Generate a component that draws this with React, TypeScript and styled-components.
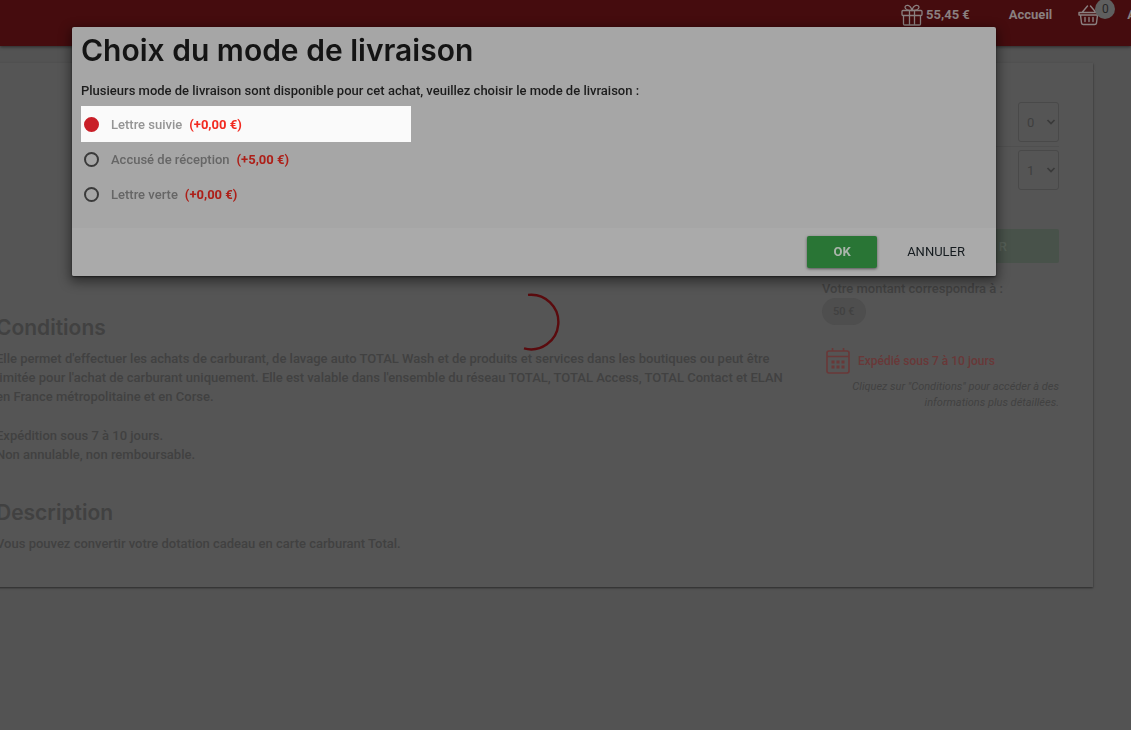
import React, { useState } from "react";
import styled, { createGlobalStyle } from "styled-components";

const GlobalStyle = createGlobalStyle`
  * { box-sizing: border-box; }
  html, body { margin: 0; background: #535353; }
  body { font-family: Roboto, "Liberation Sans", sans-serif; font-size: 13px; font-weight: 500; color: #414141; overflow: hidden; }
  h1, h2, p, fieldset { margin: 0; padding: 0; border: 0; }
  button, select { font-family: inherit; }
`;

const Page = styled.div`
  min-height: 100vh;
  overflow: hidden;
  background: #535353;
`;

const Header = styled.header`
  height: 46px;
  background: #450c0e;
  box-shadow: 0 1px 3px rgba(0, 0, 0, 0.5);
`;

const Nav = styled.nav`
  display: flex;
  align-items: center;
  justify-content: flex-end;
  height: 30px;
  margin-right: -5px;
`;

const NavLink = styled.a<{ $gap?: number }>`
  display: flex;
  align-items: center;
  gap: 3px;
  position: relative;
  margin-left: ${(p) => p.$gap ?? 0}px;
  color: #8a8080;
  font-size: 13px;
  font-weight: 700;
  line-height: 16px;
  text-decoration: none;
`;

const Badge = styled.span`
  position: absolute;
  left: 17px;
  top: -5px;
  width: 20px;
  height: 20px;
  border-radius: 50%;
  background: #5f5f5f;
  color: #262626;
  font-size: 12px;
  font-weight: 400;
  line-height: 20px;
  text-align: center;
`;

const Card = styled.main`
  display: grid;
  grid-template-columns: minmax(0, 1fr) 237px;
  column-gap: 24px;
  margin: 17px 38px 0 -40px;
  padding: 39px 34px 34px 36px;
  background: #555555;
  box-shadow: 0 1px 2px rgba(0, 0, 0, 0.5);
`;

const Article = styled.div`
  padding-top: 213px;
`;

const Section = styled.section`
  & + & {
    margin-top: 36px;
  }
`;

const SectionTitle = styled.h2`
  font-family: Inter, sans-serif;
  font-size: 21px;
  font-weight: 600;
  line-height: 26px;
  margin-bottom: 8px;
`;

const Paragraph = styled.p`
  line-height: 19px;
  & + & {
    margin-top: 20px;
  }
`;

const Aside = styled.aside`
  display: flex;
  flex-direction: column;
`;

const QuantityRow = styled.div`
  display: flex;
  justify-content: flex-end;
  height: 48px;

  &:first-child {
    background: linear-gradient(#4f4f4f, #4f4f4f) 0 44px / 100% 1px no-repeat;
  }
`;

const SelectBox = styled.span`
  position: relative;
  display: block;
  width: 41px;
  height: 40px;

  svg {
    position: absolute;
    right: 3px;
    top: 16px;
    pointer-events: none;
  }
`;

const Select = styled.select`
  appearance: none;
  width: 100%;
  height: 100%;
  padding: 0 8px;
  border: 1px solid #494949;
  border-radius: 3px;
  background: transparent;
  color: #3f3f3f;
  font-size: 13px;
`;

const OrderButton = styled.button`
  height: 34px;
  margin-top: 31px;
  padding: 0 52px 0 0;
  border: 0;
  border-radius: 2px;
  background: #48524a;
  color: #566058;
  font-size: 13px;
  font-weight: 500;
  text-align: right;
`;

const Amount = styled.div`
  margin-top: 18px;
  line-height: 16px;
`;

const Chip = styled.div`
  align-self: flex-start;
  margin-top: 1px;
  padding: 0 11px;
  border-radius: 14px;
  background: #4e4e4e;
  font-size: 11px;
  line-height: 27px;
`;

const Shipping = styled.div`
  display: flex;
  align-items: center;
  gap: 8px;
  margin: 22px 0 0 4px;
  color: #693838;
  font-size: 12px;
`;

const Note = styled.p`
  margin-top: 5px;
  font-size: 11px;
  font-style: italic;
  font-weight: 400;
  line-height: 16px;
  text-align: right;
`;

const Spinner = styled.svg`
  position: fixed;
  left: 502px;
  top: 293px;
`;

const Overlay = styled.div`
  position: fixed;
  inset: 0;
  padding: 27px 135px 0 72px;
`;

const Dialog = styled.form`
  border-radius: 2px;
  background: #a6a6a6;
  box-shadow: 0 4px 12px 2px rgba(0, 0, 0, 0.45), 0 1px 2px rgba(0, 0, 0, 0.5);
`;

const DialogBody = styled.div`
  padding: 4px 9px 16px;
  color: #141414;
`;

const DialogTitle = styled.h1`
  font-family: Inter, sans-serif;
  font-size: 30px;
  font-weight: 600;
  line-height: 38px;
`;

const Lead = styled.p`
  margin: 14px 0 7px;
  color: #1c1c1c;
  line-height: 16px;
`;

const Option = styled.label<{ $active: boolean }>`
  display: flex;
  align-items: center;
  width: 330px;
  max-width: 100%;
  height: ${(p) => (p.$active ? 36 : 35)}px;
  padding-left: 3px;
  background: ${(p) => (p.$active ? "#fafafa" : "transparent")};
  color: ${(p) => (p.$active ? "#959595" : "#666666")};
  cursor: pointer;
`;

const Radio = styled.input`
  appearance: none;
  width: 15px;
  height: 15px;
  margin: 0 12px 0 0;
  border: 2px solid #3a3a3a;
  border-radius: 50%;

  &:checked {
    border-color: #c91f28;
    background: #c91f28;
  }
`;

const Price = styled.strong<{ $active: boolean }>`
  margin-left: 7px;
  color: ${(p) => (p.$active ? "#f22a20" : "#ad1f18")};
  font-weight: 700;
`;

const DialogFooter = styled.footer`
  display: flex;
  justify-content: flex-end;
  align-items: center;
  gap: 14px;
  height: 48px;
  padding: 0 15px;
  border-radius: 0 0 2px 2px;
  background: #aaaaaa;
`;

const Button = styled.button<{ $primary?: boolean }>`
  height: 32px;
  min-width: 70px;
  padding: 0 16px 1px;
  border: 0;
  border-radius: 2px;
  background: ${(p) => (p.$primary ? "#297535" : "transparent")};
  box-shadow: ${(p) => (p.$primary ? "0 1px 3px rgba(0, 0, 0, 0.5)" : "none")};
  color: ${(p) => (p.$primary ? "#aab5ab" : "#151b1f")};
  font-size: 13px;
  font-weight: ${(p) => (p.$primary ? 700 : 400)};
`;

const GiftIcon = () => (
  <svg width="22" height="22" viewBox="0 0 22 22" fill="none" stroke="currentColor" strokeWidth="1.3" strokeLinejoin="round" aria-hidden="true">
    <rect x="1" y="6.5" width="20" height="5" rx="1" />
    <path d="M2.5 11.5V20q0 1 1 1h15q1 0 1-1v-8.500M8.500 6.500V21M13.500 6.500V21" />
    <path d="M11 6.500C8 6.500 4 5.500 4 3.300 4 .5 9.500.2 11 6.500ZM11 6.500C14 6.500 18 5.500 18 3.300 18 .5 12.500.2 11 6.500Z" />
  </svg>
);

const BasketIcon = () => (
  <svg width="22" height="22" viewBox="0 0 22 22" fill="none" stroke="currentColor" strokeWidth="1.4" strokeLinecap="round" strokeLinejoin="round" aria-hidden="true">
    <path d="M1 8.500h20v2.500H1zM2.500 11l1 8q.3 1.500 1.800 1.500h11.400q1.500 0 1.800-1.500l1-8M4 8.500L9.500 2M18 8.500L12.500 2" />
    <path d="M7 13.500v4M11 13.500v4M15 13.500v4" />
  </svg>
);

const CalendarIcon = () => (
  <svg width="24" height="27" viewBox="0 0 24 27" fill="none" stroke="currentColor" strokeWidth="1.6" aria-hidden="true">
    <rect x="1" y="4" width="22" height="22" rx="2" />
    <path d="M1 9.500h22M6.500 1v3M17.500 1v3" />
    <path d="M5.500 15h3M10.500 15h3M15.500 15h3M5.500 20h3M10.500 20h3M15.500 20h3" strokeWidth="3" />
  </svg>
);

const Quantity = ({ label, value }: { label: string; value: string }) => (
  <QuantityRow>
    <SelectBox>
      <Select aria-label={label} defaultValue={value}>
        <option>{value}</option>
      </Select>
      <svg width="10" height="8" viewBox="0 0 10 8" fill="none" stroke="#3a3a3a" strokeWidth="1.7" aria-hidden="true">
        <path d="M1.500 2L5 5.500 8.500 2" />
      </svg>
    </SelectBox>
  </QuantityRow>
);

const options = [
  { name: "Lettre suivie", price: "(+0,00 €)" },
  { name: "Accusé de réception", price: "(+5,00 €)" },
  { name: "Lettre verte", price: "(+0,00 €)" },
];

export default function App() {
  const [selected, setSelected] = useState(0);

  return (
    <>
      <GlobalStyle />
      <Page>
        <Header>
          <Nav>
            <NavLink href="#"><GiftIcon />55,45 €</NavLink>
            <NavLink href="#" $gap={39}>Accueil</NavLink>
            <NavLink href="#" $gap={26}><BasketIcon /><Badge>0</Badge></NavLink>
            <NavLink href="#" $gap={27}>A</NavLink>
          </Nav>
        </Header>
        <Card>
          <Article>
            <Section>
              <SectionTitle>Conditions</SectionTitle>
              <Paragraph>
                Elle permet d'effectuer les achats de carburant, de lavage auto TOTAL Wash et de produits et services dans les boutiques ou peut être
                <br />
                limitée pour l'achat de carburant uniquement. Elle est valable dans l'ensemble du réseau TOTAL, TOTAL Access, TOTAL Contact et ELAN
                <br />
                en France métropolitaine et en Corse.
              </Paragraph>
              <Paragraph>
                Expédition sous 7 à 10 jours.
                <br />
                Non annulable, non remboursable.
              </Paragraph>
            </Section>
            <Section>
              <SectionTitle>Description</SectionTitle>
              <Paragraph>Vous pouvez convertir votre dotation cadeau en carte carburant Total.</Paragraph>
            </Section>
          </Article>
          <Aside>
            <Quantity label="Montant" value="0" />
            <Quantity label="Quantité" value="1" />
            <OrderButton type="button">R</OrderButton>
            <Amount>Votre montant correspondra à :</Amount>
            <Chip>50 €</Chip>
            <Shipping><CalendarIcon />Expédié sous 7 à 10 jours</Shipping>
            <Note>Cliquez sur "Conditions" pour accéder à des informations plus détaillées.</Note>
          </Aside>
        </Card>
      </Page>
      <Spinner width="58" height="58" viewBox="0 0 58 58" fill="none" stroke="#5a0b0e" strokeWidth="2.4" aria-hidden="true">
        <path d="M26 1.900A27.300 27.300 0 1 1 22 55.400" />
      </Spinner>
      <Overlay>
        <Dialog role="dialog" aria-labelledby="delivery-title" onSubmit={(e) => e.preventDefault()}>
          <DialogBody>
            <DialogTitle id="delivery-title">Choix du mode de livraison</DialogTitle>
            <Lead>Plusieurs mode de livraison sont disponible pour cet achat, veuillez choisir le mode de livraison :</Lead>
            <fieldset aria-label="Mode de livraison">
              {options.map((o, i) => (
                <Option key={o.name} $active={i === selected}>
                  <Radio type="radio" name="delivery" checked={i === selected} onChange={() => setSelected(i)} />
                  {o.name}
                  <Price $active={i === selected}>{o.price}</Price>
                </Option>
              ))}
            </fieldset>
          </DialogBody>
          <DialogFooter>
            <Button type="submit" $primary>OK</Button>
            <Button type="button">ANNULER</Button>
          </DialogFooter>
        </Dialog>
      </Overlay>
    </>
  );
}
